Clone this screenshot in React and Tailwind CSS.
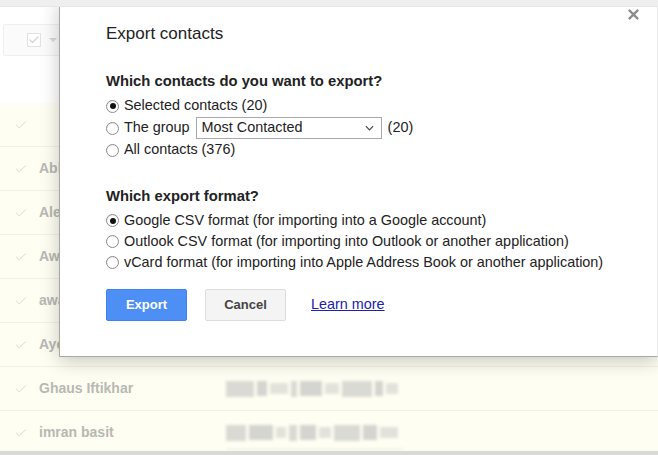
import { Check } from 'lucide-react';

const rows = [
  { name: '' },
  { name: 'Abbas Ali' },
  { name: 'Alex Brown' },
  { name: 'Awais Khan' },
  { name: 'awais ahmed' },
  { name: 'Ayesha Noor' },
  { name: 'Ghaus Iftikhar', blur: [28, 10, 18, 6, 22, 14, 30, 8, 12] },
  { name: 'imran basit', blur: [20, 24, 10, 8, 16, 12, 26, 14, 18], underline: true },
];

function Radio({ checked }) {
  return (
    <span className="w-[13px] h-[13px] rounded-full border border-[#8a8a8a] bg-white flex items-center justify-center shrink-0 shadow-[inset_0_1px_1px_rgba(0,0,0,0.08)]">
      {checked && <span className="w-[6px] h-[6px] rounded-full bg-[#111]" />}
    </span>
  );
}

function Option({ checked, children, className = 'h-[22px]' }) {
  return (
    <div className={`flex items-center gap-[5px] ${className}`}>
      <Radio checked={checked} />
      <div className="flex items-center text-[14.4px] text-[#222]">{children}</div>
    </div>
  );
}

export default function App() {
  return (
    <div className="relative w-[658px] h-[455px] overflow-hidden bg-white font-['Liberation_Sans',Arial,sans-serif]">
      {/* Background contacts list */}
      <div className="flex flex-col h-full">
        <div className="h-[23px]" />
        <div className="h-[33px] pl-[3px] flex items-center">
          <div className="w-[60px] h-[32px] border border-[#efefef] rounded-[2px] bg-[#fbfbfb] flex items-center pl-[23px] gap-[8px]">
            <span className="w-[14px] h-[14px] border border-[#e2e2e2] bg-white flex items-center justify-center">
              <Check className="w-[12px] h-[12px] text-[#d4d4d4]" strokeWidth={2.5} />
            </span>
            <span className="w-0 h-0 border-l-[4px] border-r-[4px] border-t-[4px] border-l-transparent border-r-transparent border-t-[#d8d8d8]" />
          </div>
        </div>
        <div className="h-[47px]" />
        <div className="flex-1 bg-[#fefef2]">
          {rows.map((r, i) => (
            <div key={i} className="h-[44px] flex items-center border-b border-[#f1f1e4]">
              <Check className="ml-[14px] w-[14px] h-[14px] text-[#d8d8d2]" strokeWidth={1.6} />
              <span className="ml-[11px] w-[180px] text-[14px] font-bold text-[#b8b8b4]">{r.name}</span>
              {r.blur && (
                <div className="ml-[7px] relative flex items-center gap-[3px] h-[18px] blur-[1.4px]">
                  {r.blur.map((w, j) => (
                    <span
                      key={j}
                      className={j % 3 === 1 ? 'h-[15px] bg-[#d4d4d0]' : j % 3 === 2 ? 'h-[11px] bg-[#e2e2dc]' : 'h-[16px] bg-[#dadad4]'}
                      style={{ width: w }}
                    />
                  ))}
                  {r.underline && <span className="absolute left-0 right-[-6px] bottom-[-8px] h-px bg-[#e4e4dc]" />}
                </div>
              )}
            </div>
          ))}
        </div>
      </div>

      {/* Top band */}
      <div className="absolute top-0 left-0 right-0 h-[7px] bg-[#efefef] border-b border-[#e6e6e6] z-20" />
      {/* Bottom band */}
      <div className="absolute bottom-0 left-0 right-0 h-[4px] bg-[#d9d9d6] z-20" />

      {/* Dialog */}
      <div className="absolute left-[59px] top-0 w-[599px] h-[357px] bg-white border-l border-b border-[#a8a8a8] border-r border-r-[#e8e8e8] shadow-[0_4px_18px_rgba(0,0,0,0.22)] z-10 pl-[46px] pt-[24px]">
        <button className="absolute right-[17px] top-[7px] w-[14px] h-[14px] flex items-center justify-center">
          <svg viewBox="0 0 14 14" className="w-[13px] h-[13px]">
            <path d="M2 2 L12 12 M12 2 L2 12" stroke="#8c8c8c" strokeWidth="2.4" />
          </svg>
        </button>

        <h1 className="text-[17px] leading-[20px] text-[#222]">Export contacts</h1>

        <h2 className="mt-[28px] text-[14.8px] leading-[18px] font-bold text-[#222]">Which contacts do you want to export?</h2>
        <div className="mt-[5px] flex flex-col">
          <Option checked>Selected contacts (20)</Option>
          <Option>
            <span>The group</span>
            <div className="ml-[6px] w-[186px] h-[22px] border border-[#a9a9a9] flex items-center justify-between pl-[5px] pr-[7px]">
              <span>Most Contacted</span>
              <svg viewBox="0 0 10 6" className="w-[9px] h-[6px]">
                <path d="M1 1 L5 5 L9 1" stroke="#444" strokeWidth="1.3" fill="none" />
              </svg>
            </div>
            <span className="ml-[6px]">(20)</span>
          </Option>
          <Option>All contacts (376)</Option>
        </div>

        <h2 className="mt-[26px] text-[14.8px] leading-[18px] font-bold text-[#222]">Which export format?</h2>
        <div className="mt-[5px] flex flex-col">
          <Option checked className="h-[21px]">Google CSV format (for importing into a Google account)</Option>
          <Option className="h-[21px]">Outlook CSV format (for importing into Outlook or another application)</Option>
          <Option className="h-[21px]">vCard format (for importing into Apple Address Book or another application)</Option>
        </div>

        <div className="mt-[16px] flex items-center">
          <button className="w-[81px] h-[32px] rounded-[2px] bg-[#4d8ff5] border border-[#3f82ec] text-white text-[13px] font-bold">
            Export
          </button>
          <button className="ml-[18px] w-[81px] h-[32px] rounded-[2px] bg-[#f4f4f4] border border-[#dcdcdc] text-[#444] text-[13px] font-bold">
            Cancel
          </button>
          <a href="#" className="ml-[25px] text-[14.4px] text-[#2020b0] underline">Learn more</a>
        </div>
      </div>
    </div>
  );
}
